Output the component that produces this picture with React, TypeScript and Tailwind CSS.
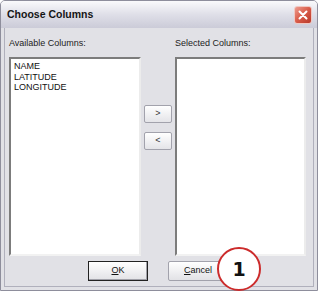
export default function App() {
  const font = { fontFamily: '"Liberation Sans", Arial, sans-serif' };

  return (
    <div className="relative w-[318px] h-[291px] bg-white overflow-hidden" style={font}>
      {/* Window frame */}
      <div className="flex flex-col w-full h-full border border-[#8e8e9c] rounded-t-[5px] bg-[#e1e1e6]">
        {/* Title bar */}
        <div className="flex items-center justify-between h-[27px] pl-[6px] pr-[5px] rounded-t-[4px] bg-gradient-to-b from-[#fafafc] via-[#dfdfe8] to-[#cbcbd8]">
          <span className="text-[10.5px] font-bold text-[#151515]">Choose Columns</span>
          <div className="flex items-center justify-center w-[18px] h-[18px] rounded-[3px] border border-[#f0c8c2] bg-gradient-to-br from-[#ec9a8e] via-[#d85a48] to-[#b8392a]">
            <svg width="10" height="10" viewBox="0 0 10 10">
              <path d="M1.5 1.5 L8.5 8.5 M8.5 1.5 L1.5 8.5" stroke="white" strokeWidth="2" strokeLinecap="round" />
            </svg>
          </div>
        </div>

        {/* Body */}
        <div className="flex-1 px-[3px] pb-[3px]">
          <div className="h-full flex flex-col border-x border-b border-[#b0b0bc] pl-[4px] pr-[6px] pt-[10px]">
            <div className="flex">
              {/* Available */}
              <div className="w-[132px] flex flex-col">
                <span className="text-[9px] leading-[11px] text-[#222]">Available Columns:</span>
                <div className="mt-[8px] h-[199px] bg-white border-2 border-t-[#7c7c7c] border-l-[#7c7c7c] border-b-[#f2f2f2] border-r-[#ececec] pl-[3px] pt-[2px]">
                  <div className="text-[9px] leading-[10.5px] text-[#111]">NAME</div>
                  <div className="text-[9px] leading-[10.5px] text-[#111]">LATITUDE</div>
                  <div className="text-[9px] leading-[10.5px] text-[#111]">LONGITUDE</div>
                </div>
              </div>

              {/* Move buttons */}
              <div className="w-[34px] flex flex-col items-center pt-[67px] gap-[9px]">
                <button className="w-[28px] h-[18px] flex items-center justify-center rounded-[2px] border border-[#a2a2ac] bg-gradient-to-b from-white to-[#e4e4e8] text-[9px] text-[#333]">
                  &gt;
                </button>
                <button className="w-[28px] h-[18px] flex items-center justify-center rounded-[2px] border border-[#a2a2ac] bg-gradient-to-b from-white to-[#e4e4e8] text-[9px] text-[#333]">
                  &lt;
                </button>
              </div>

              {/* Selected */}
              <div className="w-[131px] flex flex-col">
                <span className="text-[9px] leading-[11px] text-[#222]">Selected Columns:</span>
                <div className="mt-[8px] h-[199px] bg-white border-2 border-t-[#7c7c7c] border-l-[#7c7c7c] border-b-[#f2f2f2] border-r-[#ececec]" />
              </div>
            </div>

            {/* Bottom buttons */}
            <div className="flex mt-[5px] pl-[79px] gap-[20px]">
              <button className="w-[60px] h-[20px] flex items-center justify-center border border-[#222] bg-gradient-to-b from-white to-[#e2e2e6] shadow-[inset_-1px_-1px_0_#a0a0a8] text-[9px] text-[#111]">
                <span><span className="underline">O</span>K</span>
              </button>
              <button className="w-[60px] h-[20px] flex items-center justify-center rounded-[2px] border border-[#a2a2ac] bg-gradient-to-b from-white to-[#e2e2e6] text-[9px] text-[#111]">
                <span><span className="underline">C</span>ancel</span>
              </button>
            </div>
          </div>
        </div>
      </div>

      {/* Callout marker */}
      <div className="absolute left-[217px] top-[247px] w-[44px] h-[44px] rounded-full border-2 border-[#cc2b2b] bg-white flex items-center justify-center">
        <span className="text-[19px] font-bold text-[#111] leading-none" style={{ fontFamily: '"DejaVu Sans", sans-serif' }}>1</span>
      </div>
    </div>
  );
}
